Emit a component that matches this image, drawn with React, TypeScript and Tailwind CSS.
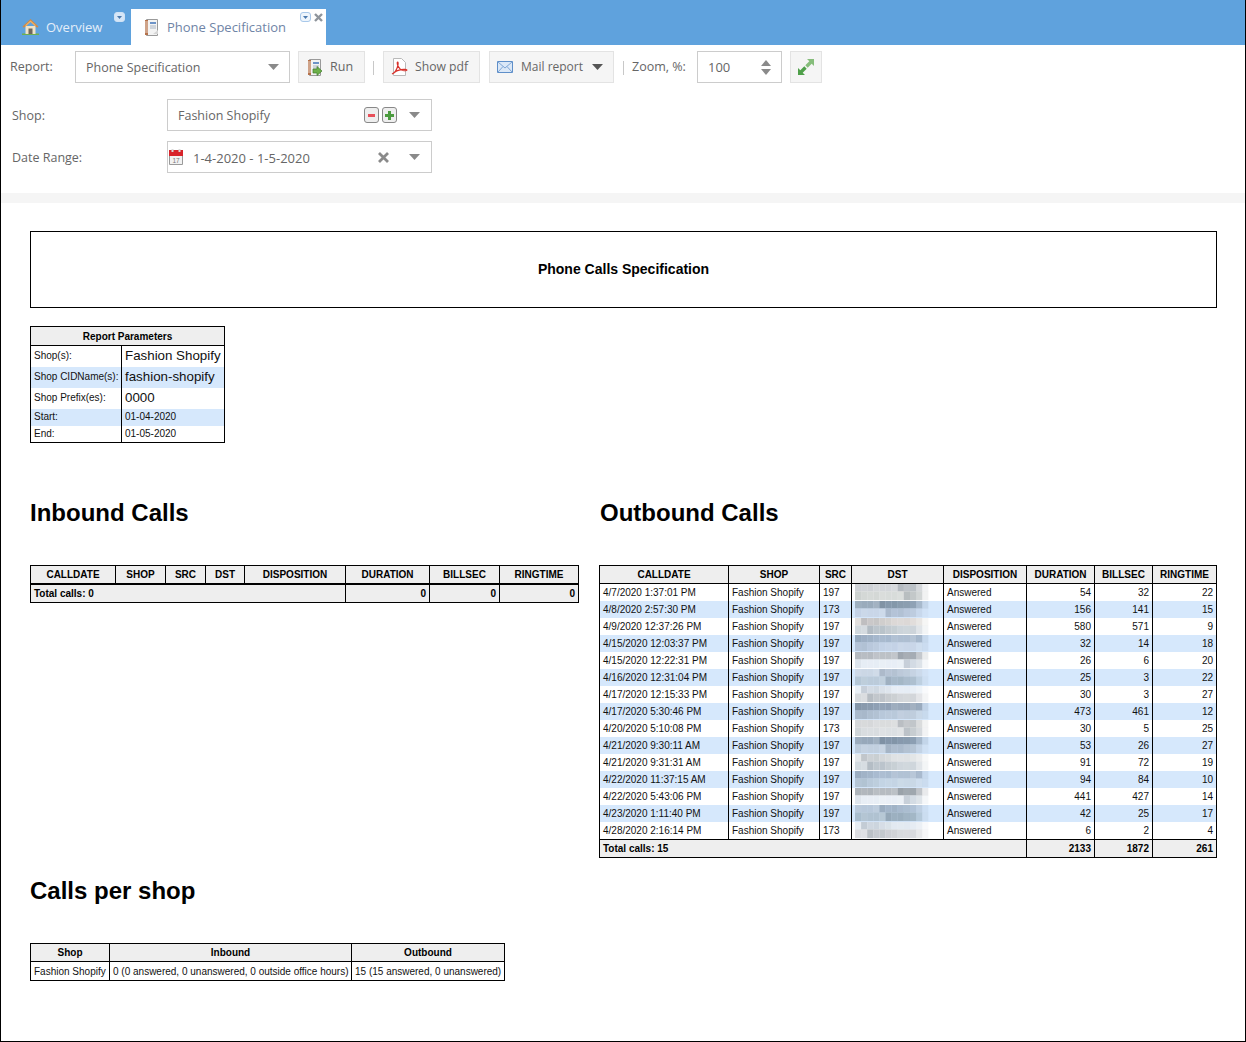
import React from 'react';

const UI = 'font-["Open_Sans",sans-serif]';
const REPORT = 'font-["Liberation_Sans",Arial,sans-serif]';

const outbound = [
  ['4/7/2020 1:37:01 PM', '197', 54, 32, 22],
  ['4/8/2020 2:57:30 PM', '173', 156, 141, 15],
  ['4/9/2020 12:37:26 PM', '197', 580, 571, 9],
  ['4/15/2020 12:03:37 PM', '197', 32, 14, 18],
  ['4/15/2020 12:22:31 PM', '197', 26, 6, 20],
  ['4/16/2020 12:31:04 PM', '197', 25, 3, 22],
  ['4/17/2020 12:15:33 PM', '197', 30, 3, 27],
  ['4/17/2020 5:30:46 PM', '197', 473, 461, 12],
  ['4/20/2020 5:10:08 PM', '173', 30, 5, 25],
  ['4/21/2020 9:30:11 AM', '197', 53, 26, 27],
  ['4/21/2020 9:31:31 AM', '197', 91, 72, 19],
  ['4/22/2020 11:37:15 AM', '197', 94, 84, 10],
  ['4/22/2020 5:43:06 PM', '197', 441, 427, 14],
  ['4/23/2020 1:11:40 PM', '197', 42, 25, 17],
  ['4/28/2020 2:16:14 PM', '173', 6, 2, 4],
];

// blurred phone numbers: base colours per row, top strip then bottom strip
const blurTints = [
  ['#cfd2d6', '#d4d8d6'],
  ['#8fa2b5', '#c3d2e6'],
  ['#dcd8d6', '#ccd4da'],
  ['#a5b7cc', '#c3d2e6'],
  ['#b5bac0', '#e6edf5'],
  ['#c6d3e3', '#b4c6d6'],
  ['#e6edf5', '#d3d6da'],
  ['#8fa0b4', '#b8c8da'],
  ['#d6d8da', '#d9dde0'],
  ['#8c9fb3', '#bccbdc'],
  ['#dfe2e4', '#cfd6dc'],
  ['#a9bbd0', '#c3d4e4'],
  ['#aeb4ba', '#e8eef5'],
  ['#b0c2d6', '#a8bccc'],
  ['#e2e9f1', '#d8dade'],
];
const overlays = [0, 0.1, -0.08, 0.14, -0.12, 0.05, 0.18, -0.05, 0.1, -0.14, 0.02, -0.2];

function Blur({ row }: { row: number }) {
  return (
    <svg width="76" height="18" className="block -my-px" aria-hidden>
      {[0, 1].map((strip) =>
        Array.from({ length: 12 }).map((_, i) => {
          const o = overlays[(i * 5 + row * 3 + strip * 7) % 12];
          const fade = i === 11 ? 0.25 : i === 10 ? 0.7 : 1;
          return (
            <g key={`${strip}-${i}`} opacity={fade}>
              <rect x={i * 6.1} y={strip * 8.5} width="6.2" height="8.6" fill={blurTints[row][strip]} />
              <rect
                x={i * 6.1}
                y={strip * 8.5}
                width="6.2"
                height="8.6"
                fill={o > 0 ? '#ffffff' : '#4a5a6a'}
                opacity={Math.abs(o)}
              />
            </g>
          );
        })
      )}
    </svg>
  );
}

function Caret({ className = '' }: { className?: string }) {
  return (
    <svg width="11" height="6" viewBox="0 0 11 6" className={className}>
      <path d="M0 0h11L5.5 6z" fill="#8a8a8a" />
    </svg>
  );
}

function HomeIcon() {
  return (
    <svg width="17" height="17" viewBox="0 0 17 17">
      <path d="M0 15.500h17V17H0z" fill="#6fae4e" />
      <path d="M3.500 8h10v8h-10z" fill="#efe3c8" />
      <path d="M6.500 10.500h4V16h-4z" fill="#6f675c" />
      <path d="M8.500 1 .5 8.500l1.300 1.200L8.500 4l6.700 5.700 1.300-1.200z" fill="#cf8a45" />
      <path d="M8.500 2.500 3.500 7v1.500l5-4.500 5 4.500V7z" fill="#eeb36a" />
    </svg>
  );
}

function NotebookIcon({ arrow = false }: { arrow?: boolean }) {
  return (
    <svg width="16" height="17" viewBox="0 0 16 17">
      <path d="M2.500.5h11v16h-11z" fill="#f3f3f3" stroke="#9a9a9a" />
      <path d="M1 1h3v15H1z" fill="#b5714a" />
      <path d="M1 3h3M1 5h3M1 7h3M1 9h3M1 11h3M1 13h3" stroke="#e9d6c8" strokeWidth="1" />
      <path d="M6 3h6v2H6z" fill="#6d93c7" />
      <path d="M6 7h6M6 9h6" stroke="#a9b4c2" />
      {arrow ? (
        <path d="M6 10h4V7.500l5 4.500-5 4.500V14H6z" fill="#6db04a" stroke="#3f7d2b" strokeWidth="0.7" />
      ) : (
        <path d="M9 15l5-4v4z" fill="#d5d5d5" />
      )}
    </svg>
  );
}

function PdfIcon() {
  return (
    <svg width="17" height="18" viewBox="0 0 17 18">
      <path d="M2.500.5h8l4 4v13h-12z" fill="#fff" stroke="#b9b9b9" />
      <path
        d="M1 16c3-1 5-5 6-9 .3-2 .2-3-.4-3s-.6 2 .4 4c1 2 3 4 5 4.500 2 .5 4 .3 4-.4s-3-1-6-.5-6 2-7.500 3.500z"
        fill="none"
        stroke="#d8312a"
        strokeWidth="1.100"
      />
    </svg>
  );
}

function MailIcon() {
  return (
    <svg width="16" height="12" viewBox="0 0 16 12">
      <path d="M.5.5h15v11H.5z" fill="#dbe8f7" stroke="#5f8fc9" />
      <path d="M1 1l7 6 7-6M1 11l5-5.500M15 11l-5-5.500" fill="none" stroke="#7ea6d6" />
    </svg>
  );
}

function ExpandIcon() {
  return (
    <svg width="18" height="18" viewBox="0 0 18 18">
      <path d="M10 1h7v7l-2.300-2.300-4 4-2.400-2.400 4-4z" fill="#86bd7b" />
      <path d="M8 17H1v-7l2.300 2.300 4-4 2.400 2.400-4 4z" fill="#4fa04a" />
    </svg>
  );
}

function CalendarIcon() {
  return (
    <svg width="14" height="16" viewBox="0 0 14 16">
      <path d="M.5 2.500h13v13H.5z" fill="#f2f2f2" stroke="#9a9a9a" />
      <path d="M0 1h14v6H0z" fill="#d8232a" />
      <path d="M2.500 0h2v3h-2zM9.500 0h2v3h-2z" fill="#d8d8d8" />
      <text x="3.500" y="14" fontSize="6.500" fill="#777" fontFamily="Liberation Sans">17</text>
    </svg>
  );
}

function TabMenu({ light = false }: { light?: boolean }) {
  return (
    <span
      className={`flex h-[10px] w-[11px] items-center justify-center rounded-[3px] border ${
        light ? 'border-[#a8c8ea] bg-[#eef5fc]' : 'border-[#cfe2f5] bg-[#d6e6f7]'
      }`}
    >
      <svg width="5" height="3" viewBox="0 0 5 3">
        <path d="M0 0h5L2.500 3z" fill="#4a79ad" />
      </svg>
    </span>
  );
}

function ToolButton({ children, className = '' }: { children: React.ReactNode; className?: string }) {
  return (
    <button className={`flex h-8 items-center rounded-none border border-[#e3e3e3] bg-[#f5f5f5] text-[#666] ${className}`}>
      {children}
    </button>
  );
}

const th = 'border border-black bg-[#eeeeee] p-0 text-center font-bold text-[10px] text-black h-[18px]';
const td = 'border-x border-black px-[3px] py-0 h-[17px] text-[10px] text-[#111] whitespace-nowrap overflow-hidden';
const tdNum = `${td} text-right`;
const tot = 'border border-black bg-[#eeeeee] px-[3px] py-0 h-[18px] text-[10px] font-bold text-black';
const big = 'border-x border-black px-[3px] py-0 text-[13.33px] whitespace-nowrap';
const small = `${td} pb-px`;

export default function App() {
  return (
    <div className="h-[1042px] w-[1246px] overflow-hidden border border-t-0 border-black bg-white">
      {/* tabs */}
      <div className={`flex h-[45px] items-end bg-[#5fa2dd] pl-px ${UI}`}>
        <div className="relative flex h-9 w-[129px] items-center pb-px pl-[20px] text-[13px] text-[#e4eef9]">
          <HomeIcon />
          <span className="ml-[7px] pt-[2px]">Overview</span>
          <span className="absolute right-[6px] top-[3px]">
            <TabMenu />
          </span>
        </div>
        <div className="relative flex h-9 w-[195px] items-center bg-white pl-[13px] text-[13px] text-[#6f84a6]">
          <NotebookIcon />
          <span className="ml-[7px] pt-px">Phone Specification</span>
          <span className="absolute right-[15px] top-[3px]">
            <TabMenu light />
          </span>
          <svg width="9" height="9" viewBox="0 0 9 9" className="absolute right-[3px] top-[4px]">
            <path d="M1 1l7 7M8 1L1 8" stroke="#8f959c" strokeWidth="2.400" />
          </svg>
        </div>
      </div>

      {/* toolbar */}
      <div className={`flex h-[38px] items-end pl-[9px] text-[12.5px] text-[#666] ${UI}`}>
        <span className="w-[65px] pb-[6px]">Report:</span>
        <div className="flex h-8 w-[215px] items-center justify-between border border-[#cccccc] pl-[10px] pr-[10px]">
          <span className="pt-[2px]">Phone Specification</span>
          <Caret />
        </div>
        <ToolButton className="ml-2 w-[67px] pl-[8px] text-[12.5px]">
          <NotebookIcon arrow />
          <span className="ml-[7px]">Run</span>
        </ToolButton>
        <span className="mx-[8px] mb-[8px] h-[14px] w-px bg-[#c8c8c8]" />
        <ToolButton className="ml-px w-[97px] pl-[7px] text-[12.2px]">
          <PdfIcon />
          <span className="ml-[7px]">Show pdf</span>
        </ToolButton>
        <ToolButton className="ml-[9px] w-[125px] pl-[7px] text-[12px]">
          <MailIcon />
          <span className="ml-[8px]">Mail report</span>
          <svg width="11" height="6" viewBox="0 0 11 6" className="ml-[9px]">
            <path d="M0 0h11L5.500 6z" fill="#555" />
          </svg>
        </ToolButton>
        <span className="ml-[9px] mr-[8px] mb-[8px] h-[14px] w-px bg-[#c8c8c8]" />
        <span className="w-[65px] pb-[6px]">Zoom, %:</span>
        <div className="flex h-8 w-[85px] items-center justify-between border border-[#cccccc] pl-[10px] pr-[10px]">
          <span className="pt-[2px] text-[13px]">100</span>
          <span className="flex flex-col gap-[3px]">
            <svg width="10" height="6" viewBox="0 0 10 6"><path d="M0 6h10L5 0z" fill="#8a8a8a" /></svg>
            <svg width="10" height="6" viewBox="0 0 10 6"><path d="M0 0h10L5 6z" fill="#8a8a8a" /></svg>
          </span>
        </div>
        <ToolButton className="ml-2 w-8 justify-center">
          <ExpandIcon />
        </ToolButton>
      </div>

      {/* filters */}
      <div className={`flex flex-col gap-[10px] pl-[11px] pt-[16px] text-[12.5px] text-[#666] ${UI}`}>
        <div className="flex items-center">
          <span className="w-[155px] pt-[2px]">Shop:</span>
          <div className="flex h-8 w-[265px] items-center border border-[#cccccc] pl-[10px] pr-[11px]">
            <span className="pt-[3px]">Fashion Shopify</span>
            <span className="ml-auto flex h-[16px] w-[15px] items-center justify-center rounded-[3px] border border-[#888] bg-[#eee]">
              <span className="h-[3px] w-[7px] bg-[#e8505a]" />
            </span>
            <span className="ml-[3px] flex h-[16px] w-[15px] items-center justify-center rounded-[3px] border border-[#888] bg-[#eee]">
              <svg width="9" height="9" viewBox="0 0 9 9"><path d="M3 0h3v3h3v3H6v3H3V6H0V3h3z" fill="#4b9b3e" /></svg>
            </span>
            <Caret className="ml-[12px]" />
          </div>
        </div>
        <div className="flex items-center">
          <span className="w-[155px] pt-[3px]">Date Range:</span>
          <div className="flex h-8 w-[265px] items-center border border-[#cccccc] pl-[1px] pr-[11px]">
            <CalendarIcon />
            <span className="ml-[10px] pt-[3px] text-[13px]">1-4-2020 - 1-5-2020</span>
            <svg width="11" height="11" viewBox="0 0 11 11" className="ml-auto">
              <path d="M1 1l9 9M10 1l-9 9" stroke="#8a8a8a" strokeWidth="2.800" />
            </svg>
            <Caret className="ml-[20px]" />
          </div>
        </div>
      </div>

      <div className="mt-5 h-[10px] bg-[#f5f5f5]" />

      {/* report */}
      <div className={`pl-[29px] pr-[28px] pt-[28px] ${REPORT}`}>
        <div className="flex h-[77px] w-[1187px] items-center justify-center border border-black text-[14px] font-bold text-black">
          Phone Calls Specification
        </div>

        <table className="mt-[18px] w-[195px] table-fixed border-collapse">
          <colgroup>
            <col className="w-[91px]" />
            <col />
          </colgroup>
          <thead>
            <tr>
              <th colSpan={2} className={`${th} h-[19px]`}>Report Parameters</th>
            </tr>
          </thead>
          <tbody className="text-[#111]">
            <tr className="h-[21px]">
              <td className={small}>Shop(s):</td>
              <td className={big}>Fashion Shopify</td>
            </tr>
            <tr className="h-[21px] bg-[#d6e8fc]">
              <td className={small}>Shop CIDName(s):</td>
              <td className={big}>fashion-shopify</td>
            </tr>
            <tr className="h-[21px]">
              <td className={small}>Shop Prefix(es):</td>
              <td className={big}>0000</td>
            </tr>
            <tr className="bg-[#d6e8fc]">
              <td className={small}>Start:</td>
              <td className={small}>01-04-2020</td>
            </tr>
            <tr className="border-b border-black">
              <td className={td}>End:</td>
              <td className={td}>01-05-2020</td>
            </tr>
          </tbody>
        </table>

        <div className="mt-[56px] flex items-start">
          <div className="w-[570px]">
            <h2 className="h-7 text-[24px] leading-7 font-bold text-black">Inbound Calls</h2>
            <table className="mt-[38px] w-[549px] table-fixed border-collapse">
              <colgroup>
                <col className="w-[85px]" />
                <col className="w-[50px]" />
                <col className="w-[40px]" />
                <col className="w-[39px]" />
                <col className="w-[101px]" />
                <col className="w-[84px]" />
                <col className="w-[70px]" />
                <col />
              </colgroup>
              <thead>
                <tr>
                  {['CALLDATE', 'SHOP', 'SRC', 'DST', 'DISPOSITION', 'DURATION', 'BILLSEC', 'RINGTIME'].map((h) => (
                    <th key={h} className={th}>{h}</th>
                  ))}
                </tr>
              </thead>
              <tbody>
                <tr className="border-t-2 border-black">
                  <td colSpan={5} className={`${tot} h-[19px] border-t-2`}>Total calls: 0</td>
                  <td className={`${tot} h-[19px] border-t-2 text-right`}>0</td>
                  <td className={`${tot} h-[19px] border-t-2 text-right`}>0</td>
                  <td className={`${tot} h-[19px] border-t-2 text-right`}>0</td>
                </tr>
              </tbody>
            </table>
          </div>

          <div className="w-[618px]">
            <h2 className="ml-px h-7 text-[24px] leading-7 font-bold text-black">Outbound Calls</h2>
            <table className="mt-[38px] w-[618px] table-fixed border-collapse">
              <colgroup>
                <col className="w-[129px]" />
                <col className="w-[91px]" />
                <col className="w-[32px]" />
                <col className="w-[92px]" />
                <col className="w-[83px]" />
                <col className="w-[68px]" />
                <col className="w-[58px]" />
                <col />
              </colgroup>
              <thead>
                <tr>
                  {['CALLDATE', 'SHOP', 'SRC', 'DST', 'DISPOSITION', 'DURATION', 'BILLSEC', 'RINGTIME'].map((h) => (
                    <th key={h} className={th}>{h}</th>
                  ))}
                </tr>
              </thead>
              <tbody>
                {outbound.map((r, i) => (
                  <tr key={i} className={`${i % 2 ? 'bg-[#d6e8fc]' : 'bg-white'} ${i === 14 ? 'h-[18px]' : ''}`}>
                    <td className={td}>{r[0]}</td>
                    <td className={td}>Fashion Shopify</td>
                    <td className={td}>{r[1]}</td>
                    <td className={td}>
                      <Blur row={i} />
                    </td>
                    <td className={td}>Answered</td>
                    <td className={tdNum}>{r[2]}</td>
                    <td className={tdNum}>{r[3]}</td>
                    <td className={tdNum}>{r[4]}</td>
                  </tr>
                ))}
                <tr>
                  <td colSpan={5} className={tot}>Total calls: 15</td>
                  <td className={`${tot} text-right`}>2133</td>
                  <td className={`${tot} text-right`}>1872</td>
                  <td className={`${tot} text-right`}>261</td>
                </tr>
              </tbody>
            </table>
          </div>
        </div>

        <h2 className="mt-[19px] h-7 text-[24px] leading-7 font-bold text-black">Calls per shop</h2>
        <table className="mt-[38px] w-[475px] table-fixed border-collapse">
          <colgroup>
            <col className="w-[79px]" />
            <col className="w-[242px]" />
            <col />
          </colgroup>
          <thead>
            <tr>
              <th className={th}>Shop</th>
              <th className={th}>Inbound</th>
              <th className={th}>Outbound</th>
            </tr>
          </thead>
          <tbody>
            <tr className="h-[19px] border-b border-black">
              <td className={td}>Fashion Shopify</td>
              <td className={td}>0 (0 answered, 0 unanswered, 0 outside office hours)</td>
              <td className={td}>15 (15 answered, 0 unanswered)</td>
            </tr>
          </tbody>
        </table>
      </div>
    </div>
  );
}
